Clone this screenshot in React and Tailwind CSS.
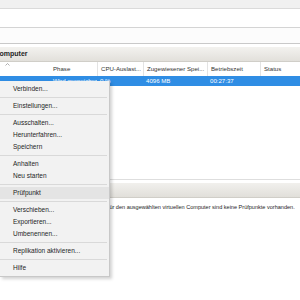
import React from 'react';

const menu = [
  ['Verbinden...'],
  'sep',
  ['Einstellungen...'],
  'sep',
  ['Ausschalten...'],
  ['Herunterfahren...'],
  ['Speichern'],
  'sep',
  ['Anhalten'],
  ['Neu starten'],
  'sep',
  ['Prüfpunkt', true],
  'sep',
  ['Verschieben...'],
  ['Exportieren...'],
  ['Umbenennen...'],
  'sep',
  ['Replikation aktivieren...'],
  'sep',
  ['Hilfe'],
];

const cell = 'pl-[3px] h-full flex items-center whitespace-nowrap overflow-hidden';

const App = () => {
  return (
    <div
      className="relative w-[300px] h-[300px] overflow-hidden bg-white text-[6.5px] text-[#1e1e1e] flex flex-col"
      style={{ fontFamily: '"Liberation Sans", Arial, sans-serif' }}
    >
      {/* top bars */}
      <div className="h-[9px] shrink-0 bg-[#f0f0f0] border-b border-[#dadada]" />
      <div className="h-[19px] shrink-0 bg-white border-b border-[#d4d4d4]" />
      <div className="h-[16px] shrink-0 bg-[#fcfcfc] border-b border-[#c9c9c9]" />
      <div className="h-[3px] shrink-0 bg-white" />

      {/* pane header */}
      <div className="h-[15px] shrink-0 flex items-center bg-gradient-to-b from-[#f3f2ef] to-[#e2e0db] border-b border-[#d0cec8] overflow-hidden whitespace-nowrap">
        <span className="ml-[-5.5px] font-bold text-[7px]">Computer</span>
      </div>

      {/* column headers */}
      <div className="relative h-[14px] shrink-0 grid grid-cols-[50px_47px_46px_64px_53px_1fr] items-center text-[#333] text-[6.1px]">
        <svg className="absolute left-[5px] top-[1px]" width="5" height="3" viewBox="0 0 5 3">
          <path d="M0.5 2.5 L2.5 0.5 L4.5 2.5" fill="none" stroke="#9a9a9a" strokeWidth="0.8" />
        </svg>
        <div />
        <div className={cell}>Phase</div>
        <div className={`${cell} border-l border-[#e3e3e3]`}>CPU-Auslast...</div>
        <div className={`${cell} border-l border-[#e3e3e3]`}>Zugewiesener Spei...</div>
        <div className={`${cell} border-l border-[#e3e3e3]`}>Betriebszeit</div>
        <div className={`${cell} border-l border-[#e3e3e3]`}>Status</div>
      </div>

      {/* selected row */}
      <div className="h-[10px] shrink-0 grid grid-cols-[50px_47px_46px_64px_53px_1fr] items-center bg-[#2f8de4] text-white text-[6.1px]">
        <div />
        <div className={cell}>Wird gespeichert...</div>
        <div className={cell}>0 %</div>
        <div className={cell}>4096 MB</div>
        <div className={cell}>00:27:37</div>
        <div />
      </div>

      <div className="flex-1 max-h-[93px]" />

      {/* lower pane */}
      <div className="h-[1px] shrink-0 bg-[#dedede]" />
      <div className="h-[3px] shrink-0" />
      <div className="h-[15px] shrink-0 bg-gradient-to-b from-[#f1f0ed] to-[#e1dfda] border-b border-[#d0cec8]" />
      <div className="h-[13px] shrink-0 flex items-end whitespace-nowrap pl-[106px] text-[5.55px]">
        Für den ausgewählten virtuellen Computer sind keine Prüfpunkte vorhanden.
      </div>

      {/* context menu */}
      <div className="absolute left-0 top-[81px] w-[110px] bg-[#f2f2f2] border-r border-b border-[#c8c8c8] shadow-[2px_2px_3px_rgba(0,0,0,0.18)] py-[2px] flex flex-col">
        {menu.map((m, i) =>
          m === 'sep' ? (
            <div key={i} className="h-[5px] flex items-center">
              <div className="h-px w-[107px] bg-[#d9d9d9]" />
            </div>
          ) : (
            <div
              key={i}
              className={`h-[12px] flex items-center pl-[13px] whitespace-nowrap ${m[1] ? 'bg-[#e4e4e4]' : ''}`}
            >
              {m[0]}
            </div>
          )
        )}
      </div>
    </div>
  );
};

export default App;
